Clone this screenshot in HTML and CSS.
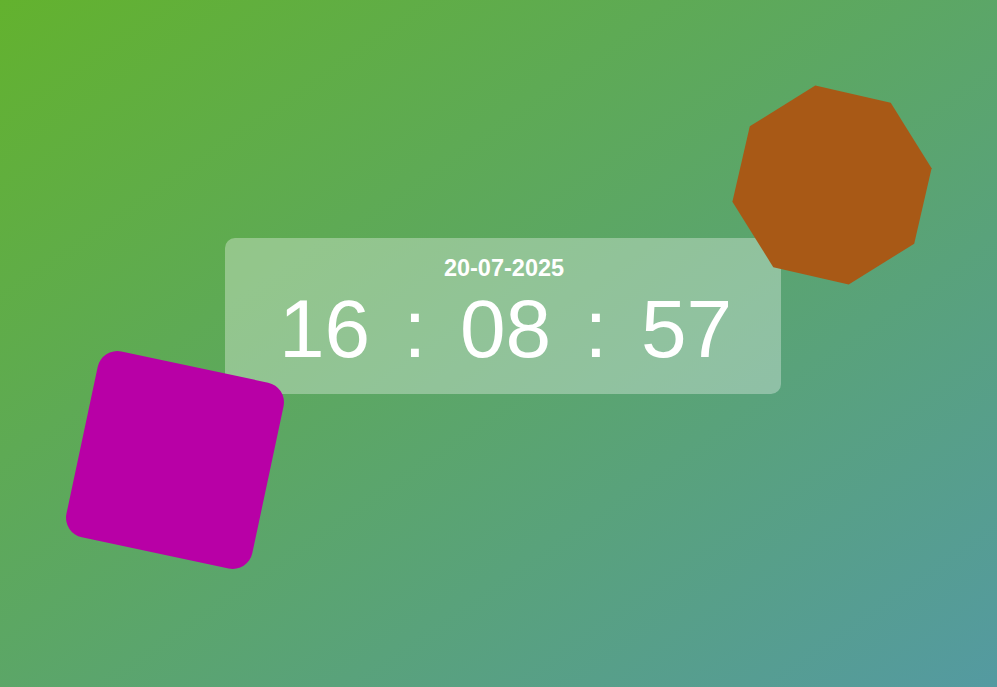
FILE: index.html
```html
<!DOCTYPE html>
<html>
<head>
<meta charset="utf-8">
<link rel="stylesheet" href="styles.css">
</head>
<body>
<main class="stage">
  <section class="clock">
    <div class="date">20-07-2025</div>
    <div class="time">
      <span class="part">16</span>
      <span class="sep">:</span>
      <span class="part">08</span>
      <span class="sep">:</span>
      <span class="part">57</span>
    </div>
  </section>
  <div class="square"></div>
  <svg class="octagon" width="202" height="202" viewBox="0 0 202 202">
    <polygon points="84.3,1.4 159.7,18.8 200.6,84.3 183.2,159.7 117.7,200.6 42.3,183.2 1.4,117.7 18.8,42.3" fill="#a85916"/>
  </svg>
</main>
</body>
</html>
```

FILE: styles.css
```css
html, body {
  margin: 0;
  padding: 0;
}
body {
  width: 997px;
  height: 687px;
  overflow: hidden;
  background: linear-gradient(to bottom right, #63b22e, #549aa1);
  font-family: "Liberation Sans", Arial, sans-serif;
  color: #fff;
}
.stage {
  position: relative;
  width: 997px;
  height: 687px;
  padding: 238px 0 0 225px;
  box-sizing: border-box;
}
.clock {
  width: 556px;
  height: 156px;
  box-sizing: border-box;
  padding-top: 17px;
  border-radius: 10px;
  background: rgba(255, 255, 255, 0.33);
  display: flex;
  flex-direction: column;
  align-items: center;
}
.date {
  font-size: 23.5px;
  font-weight: bold;
  line-height: 27px;
  padding-left: 2px;
}
.time {
  display: flex;
  gap: 33.5px;
  padding-left: 5px;
  font-size: 82px;
  line-height: 94px;
}
.square {
  position: absolute;
  left: 80px;
  top: 365px;
  width: 190px;
  height: 190px;
  border-radius: 20px;
  background: #b800a6;
  transform: rotate(12deg);
}
.octagon {
  position: absolute;
  left: 731px;
  top: 84px;
}
```
